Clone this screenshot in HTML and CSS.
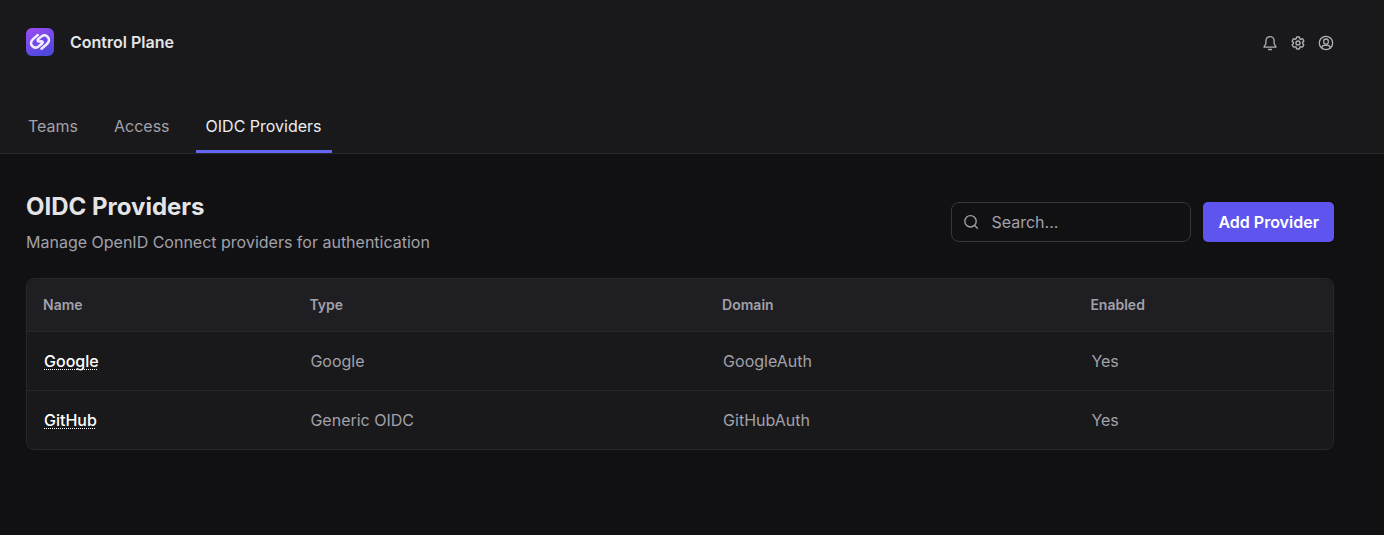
FILE: index.html
```html
<!DOCTYPE html>
<html lang="en">
<head>
    <meta charset="UTF-8">
    <meta name="viewport" content="width=device-width, initial-scale=1.0">
    <title>OIDC Providers - Control Plane</title>
    <link rel="icon" href="data:,">
    <link rel="stylesheet" href="styles.css">
</head>
<body>
    <header class="header">
        <div class="topbar">
            <a class="brand" href="#">
                <svg class="logo" viewBox="0 0 28 28" aria-hidden="true">
                    <defs>
                        <linearGradient id="logoFill" x1="0" y1="0" x2="0.5" y2="1">
                            <stop offset="0" stop-color="#a04cf5"/>
                            <stop offset="1" stop-color="#4f48dd"/>
                        </linearGradient>
                    </defs>
                    <rect width="28" height="28" rx="6" fill="url(#logoFill)"/>
                    <path d="M11.800 7L7.300 10.900C4.600 13.200 4.400 16 6.100 17.900C7.800 19.800 10.400 20 12.500 18.400L16 15.600C17.200 14.500 16.800 13.200 15.600 13.200L13 13.500C11.500 13.300 11.200 12.100 12.400 11L15.500 8.400C17.600 6.900 20.200 7.200 21.900 9.100C23.600 11 23.400 13.900 20.700 16.200L15.500 20.700" fill="none" stroke="#efecff" stroke-width="2.500" stroke-linecap="round" stroke-linejoin="round"/>
                </svg>
                <span class="brand-name">Control Plane</span>
            </a>
            <div class="actions">
                <button class="icon-btn" type="button" aria-label="Notifications">
                    <svg viewBox="0 0 16 16"><path d="M8 1.6a4.1 4.1 0 0 0-4.1 4.1v2.5c0 .8-.5 1.500-1 2.200-.4.500-.9 1-.9 1.700h12c0-.7-.5-1.200-.9-1.700-.5-.7-1-1.400-1-2.200V5.700A4.100 4.100 0 0 0 8 1.600z"/><path d="M6.600 14.500h2.800"/></svg>
                </button>
                <button class="icon-btn" type="button" aria-label="Settings">
                    <svg viewBox="0 0 24 24"><g stroke-width="2.100"><path d="M9.600 3.900c.1-.5.600-.9 1.100-.9h2.600c.5 0 1 .4 1.100.9l.2 1.300c.1.400.3.700.6.900l.3.100c.3.200.7.200 1.100.1l1.200-.5c.5-.2 1.100 0 1.400.5l1.300 2.200c.3.500.2 1.100-.3 1.400l-1 .9c-.3.200-.4.600-.4 1v.3c0 .4.100.7.400 1l1 .8c.4.400.5 1 .3 1.400l-1.300 2.300c-.3.500-.9.700-1.400.5l-1.200-.5c-.4-.1-.8-.1-1.100.1l-.3.200c-.3.200-.5.500-.6.900l-.2 1.300c-.1.500-.6.900-1.100.9h-2.600c-.5 0-1-.4-1.100-.9l-.2-1.300c-.1-.4-.3-.7-.6-.9l-.3-.1c-.3-.2-.7-.3-1.100-.1l-1.200.4c-.5.200-1.100 0-1.400-.5l-1.300-2.200c-.3-.5-.2-1.100.3-1.400l1-.9c.3-.2.400-.6.400-1v-.3c0-.4-.1-.7-.4-1l-1-.8c-.4-.4-.5-1-.3-1.400l1.300-2.300c.3-.5.900-.7 1.400-.5l1.200.5c.4.100.8.100 1.100-.1l.3-.2c.3-.2.500-.5.600-.9z"/><circle cx="12" cy="12" r="3"/></g></svg>
                </button>
                <button class="icon-btn" type="button" aria-label="Account">
                    <svg viewBox="0 0 16 16"><circle cx="8" cy="8" r="6.700"/><rect x="5.700" y="4" width="4.600" height="5.200" rx="2.200"/><path d="M3.900 13.100v-.4c0-1.400 1-2.300 2.400-2.300h3.400c1.400 0 2.400.9 2.400 2.300v.4"/></svg>
                </button>
            </div>
        </div>
        <nav class="tabs">
            <a class="tab" href="#">Teams</a>
            <a class="tab" href="#">Access</a>
            <a class="tab active" href="#" aria-current="page">OIDC Providers</a>
        </nav>
    </header>

    <main class="content">
        <div class="page-head">
            <div>
                <h1>OIDC Providers</h1>
                <p class="subtitle">Manage OpenID Connect providers for authentication</p>
            </div>
            <div class="toolbar">
                <label class="search">
                    <svg class="search-icon" viewBox="0 0 16 16" aria-hidden="true"><circle cx="7.500" cy="7.300" r="5.700"/><path d="M11.600 11.500L14.400 14.300"/></svg>
                    <input type="text" placeholder="Search..." aria-label="Search">
                </label>
                <button class="add-btn" type="button">Add Provider</button>
            </div>
        </div>

        <div class="table-wrap">
            <table class="providers">
                <thead>
                    <tr>
                        <th class="col-name">Name</th>
                        <th class="col-type">Type</th>
                        <th class="col-domain">Domain</th>
                        <th>Enabled</th>
                    </tr>
                </thead>
                <tbody>
                    <tr>
                        <td><a href="#">Google</a></td>
                        <td>Google</td>
                        <td>GoogleAuth</td>
                        <td>Yes</td>
                    </tr>
                    <tr>
                        <td><a href="#">GitHub</a></td>
                        <td>Generic OIDC</td>
                        <td>GitHubAuth</td>
                        <td>Yes</td>
                    </tr>
                </tbody>
            </table>
        </div>
    </main>
</body>
</html>
```

FILE: styles.css
```css
* {
    box-sizing: border-box;
}

body {
    margin: 0;
    min-height: 100vh;
    background-color: #111113;
    color: #a1a1aa;
    font-family: Inter, sans-serif;
    font-size: 16px;
    line-height: 24px;
}

a {
    color: inherit;
    text-decoration: none;
}

button,
input {
    font: inherit;
}

/* Header styles */
.header {
    background-color: #19191b;
    border-bottom: 1px solid #29292d;
}

.topbar {
    display: flex;
    justify-content: space-between;
    align-items: center;
    padding: 28px 50px 0 26px;
}

.brand {
    display: flex;
    align-items: center;
    gap: 16px;
}

.logo {
    width: 28px;
    height: 28px;
}

.brand-name {
    color: #e4e4e7;
    font-weight: 600;
}

.actions {
    display: flex;
    gap: 12px;
    padding-top: 2px;
}

.icon-btn {
    display: flex;
    padding: 0;
    border: none;
    background: none;
    color: #b0b0b8;
    cursor: pointer;
}

.icon-btn svg,
.search-icon {
    width: 16px;
    height: 16px;
    fill: none;
    stroke: currentColor;
    stroke-width: 1.3;
    stroke-linecap: round;
    stroke-linejoin: round;
}

/* Tabs */
.tabs {
    display: flex;
    gap: 16px;
    margin-top: 46px;
    padding: 0 18px;
}

.tab {
    padding: 12px 10px;
    border-bottom: 3px solid transparent;
}

.tab.active {
    color: #ececef;
    border-bottom-color: #6366f1;
}

/* Page content */
.content {
    padding: 36px 50px 36px 26px;
}

.page-head {
    display: flex;
    justify-content: space-between;
    align-items: center;
    margin-bottom: 24px;
}

h1 {
    margin: 0 0 6px;
    color: #e4e4e7;
    font-size: 24px;
    font-weight: 700;
    line-height: 34px;
}

.subtitle {
    margin: 0;
}

.toolbar {
    display: flex;
    gap: 12px;
}

.search {
    display: flex;
    align-items: center;
    gap: 12px;
    width: 240px;
    height: 40px;
    padding: 0 11px;
    border: 1px solid #36363b;
    border-radius: 8px;
}

.search-icon {
    flex-shrink: 0;
}

.search input {
    width: 100%;
    min-width: 0;
    padding: 0;
    border: none;
    outline: none;
    background: none;
    color: #e4e4e7;
}

.search input::placeholder {
    color: #a1a1aa;
    opacity: 1;
}

.search:focus-within {
    border-color: #6366f1;
}

.add-btn {
    height: 40px;
    padding: 0 15px;
    border: none;
    border-radius: 5px;
    background-color: #5f55ee;
    color: #fff;
    font-weight: 600;
    cursor: pointer;
}

.add-btn:hover {
    background-color: #6f66f2;
}

/* Providers table */
.table-wrap {
    overflow: hidden;
    border: 1px solid #27272a;
    border-radius: 8px;
    background-color: #19191b;
}

.providers {
    width: 100%;
    border-collapse: separate;
    border-spacing: 0;
    table-layout: fixed;
    text-align: left;
}

.providers th {
    padding: 14px 16px;
    background-color: #1f1e23;
    font-size: 14px;
    font-weight: 600;
}

.providers td {
    padding: 17px;
    border-top: 1px solid #27272a;
}

.providers tbody a {
    color: #fff;
    font-weight: 500;
    text-decoration: underline dotted 1px;
    text-underline-offset: 2px;
    text-decoration-skip-ink: none;
}

.col-name {
    width: 20.4%;
}

.col-type {
    width: 31.6%;
}

.col-domain {
    width: 28.2%;
}
```
